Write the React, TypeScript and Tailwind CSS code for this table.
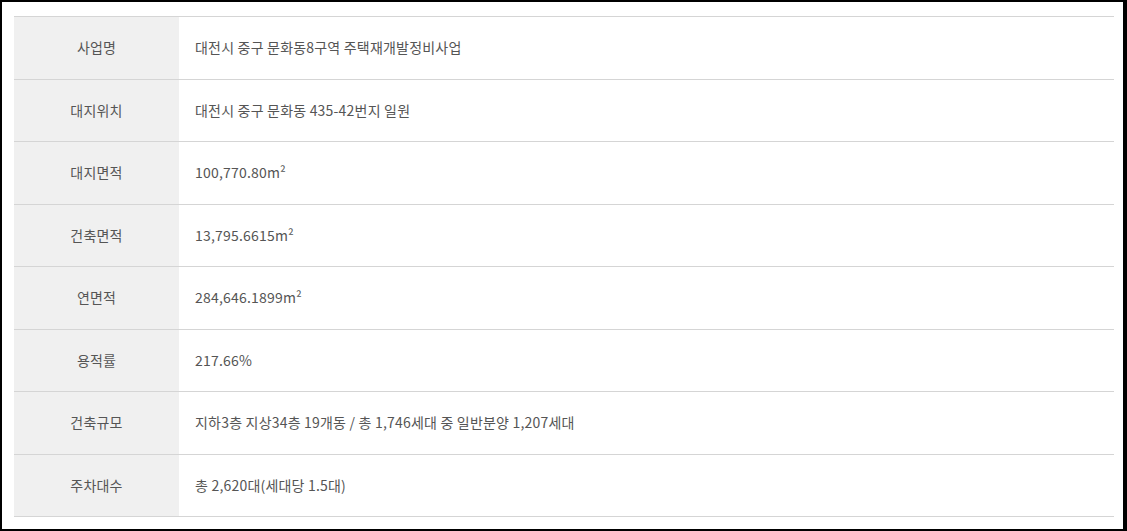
const ROWS: Array<{ label: string; value: string }> = [
  { label: '사업명', value: '대전시 중구 문화동8구역 주택재개발정비사업' },
  { label: '대지위치', value: '대전시 중구 문화동 435-42번지 일원' },
  { label: '대지면적', value: '100,770.80m²' },
  { label: '건축면적', value: '13,795.6615m²' },
  { label: '연면적', value: '284,646.1899m²' },
  { label: '용적률', value: '217.66%' },
  { label: '건축규모', value: '지하3층 지상34층 19개동 / 총 1,746세대 중 일반분양 1,207세대' },
  { label: '주차대수', value: '총 2,620대(세대당 1.5대)' },
];

export default function App() {
  return (
    <div
      className="w-[1127px] h-[531px] bg-white border-black border-t-2 border-l-2 border-b-2 border-r-4 pl-3 pt-[14px] text-[14px] tracking-[0.2px] text-[#555]"
      style={{ fontFamily: '"Noto Sans CJK KR", "Noto Sans", sans-serif' }}
    >
      <div className="w-[1100px] border-t border-[#d5d5d5]">
        {ROWS.map((row) => (
          <div key={row.label} className="flex h-[62.5px] border-b border-[#d5d5d5]">
            <div className="w-[165px] shrink-0 bg-[#f0f0f0] flex items-center justify-center">
              {row.label}
            </div>
            <div className="flex-1 flex items-center pl-4">{row.value}</div>
          </div>
        ))}
      </div>
    </div>
  );
}
